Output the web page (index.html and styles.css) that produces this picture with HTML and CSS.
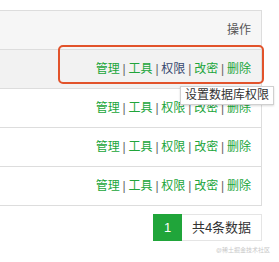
FILE: index.html
```html
<!DOCTYPE html>
<html lang="zh-CN">
<head>
    <meta charset="UTF-8">
    <meta name="viewport" content="width=device-width, initial-scale=1.0">
    <title>数据库</title>
    <link rel="stylesheet" href="styles.css">
</head>
<body>
    <div class="page">
        <table class="db-table">
            <thead>
                <tr><th>操作</th></tr>
            </thead>
            <tbody>
                <tr class="hover">
                    <td>
                        <a href="#">管理</a> | <a href="#">工具</a> | <a href="#" class="active">权限</a> | <a href="#">改密</a> | <a href="#">删除</a>
                    </td>
                </tr>
                <tr>
                    <td>
                        <a href="#">管理</a> | <a href="#">工具</a> | <a href="#">权限</a> | <a href="#">改密</a> | <a href="#">删除</a>
                    </td>
                </tr>
                <tr>
                    <td>
                        <a href="#">管理</a> | <a href="#">工具</a> | <a href="#">权限</a> | <a href="#">改密</a> | <a href="#">删除</a>
                    </td>
                </tr>
                <tr>
                    <td>
                        <a href="#">管理</a> | <a href="#">工具</a> | <a href="#">权限</a> | <a href="#">改密</a> | <a href="#">删除</a>
                    </td>
                </tr>
            </tbody>
        </table>

        <div class="pager">
            <span class="pager-current">1</span>
            <span class="pager-total">共4条数据</span>
        </div>

        <div class="watermark">@稀土掘金技术社区</div>

        <!-- annotation + tooltip over the first row -->
        <div class="highlight"></div>
        <div class="tip">设置数据库权限</div>
    </div>
</body>
</html>
```

FILE: styles.css
```css
body {
    margin: 0;
    background: #fff;
    font-family: "Liberation Sans", "Noto Sans CJK SC", sans-serif;
    font-size: 12px;
    color: #333;
}

.page {
    position: relative;
    width: 279px;
    padding-top: 10px;
}

.db-table {
    width: 262px;
    border-collapse: collapse;
    border-top: 1px solid #ddd;
    border-right: 1px solid #ddd;
}

.db-table th,
.db-table td {
    height: 38px;
    padding: 0 10px 0 0;
    text-align: right;
    border-bottom: 1px solid #ddd;
    line-height: 38px;
    white-space: nowrap;
}

.db-table th {
    font-weight: normal;
    color: #555;
    background: #f6f6f6;
}

.db-table tr.hover td {
    background: #f2f2f2;
}

.db-table td {
    color: #666;
    word-spacing: -0.5px;
}

.db-table a {
    color: #20a53a;
    text-decoration: none;
}

.db-table a.active {
    color: #37476e;
}

.pager {
    display: flex;
    justify-content: flex-end;
    width: 262px;
    margin-top: 8px;
}

.pager-current {
    width: 29px;
    height: 27px;
    line-height: 27px;
    text-align: center;
    background: #20a53a;
    color: #fff;
    font-size: 13px;
}

.pager-total {
    width: 79px;
    height: 25px;
    line-height: 25px;
    text-align: center;
    border: 1px solid #e5e5e5;
    border-left: 0;
    font-size: 13px;
    color: #333;
}

.watermark {
    margin-top: 4px;
    padding-right: 9px;
    text-align: right;
    font-size: 6px;
    color: #c8c8c8;
}

.highlight {
    position: absolute;
    left: 58px;
    top: 45px;
    width: 202px;
    height: 35px;
    border: 2px solid #e2532b;
    border-radius: 5px;
}

.tip {
    position: absolute;
    left: 180px;
    top: 86px;
    padding: 0 4px;
    height: 17px;
    line-height: 17px;
    background: #fff;
    border: 1px solid #d0d0d0;
    box-shadow: 0 1px 2px rgba(0, 0, 0, 0.15);
    font-size: 12px;
    color: #333;
    white-space: nowrap;
}
```
